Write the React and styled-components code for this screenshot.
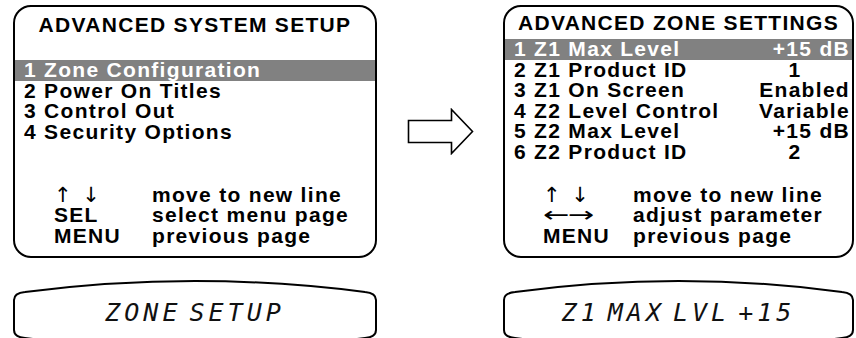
import React from "react";
import styled, { createGlobalStyle } from "styled-components";

const systemItems = [
  { id: 1, label: "1 Zone Configuration", active: true },
  { id: 2, label: "2 Power On Titles" },
  { id: 3, label: "3 Control Out" },
  { id: 4, label: "4 Security Options" },
];

const zoneItems = [
  { id: 1, label: "1 Z1 Max Level", value: "+15 dB", active: true },
  { id: 2, label: "2 Z1 Product ID", value: "1", center: true },
  { id: 3, label: "3 Z1 On Screen", value: "Enabled" },
  { id: 4, label: "4 Z2 Level Control", value: "Variable" },
  { id: 5, label: "5 Z2 Max Level", value: "+15 dB" },
  { id: 6, label: "6 Z2 Product ID", value: "2", center: true },
];

const GlobalStyle = createGlobalStyle`
  html, body {
    margin: 0;
    padding: 0;
    background: #fff;
    overflow: hidden;
  }
  body {
    font-family: "Liberation Sans", Arial, Helvetica, sans-serif;
    color: #000;
  }
`;

// barrel shaped outline of the front panel display
const lcdPath = (w) =>
  `M12 12 Q${w / 2} -10 ${w - 12} 12 Q${w - 1} 13 ${w - 1} 20 L${w - 1} 50 ` +
  `Q${w - 1} 57 ${w - 12} 58 Q${w / 2} 80 12 58 Q1 57 1 50 L1 20 Q1 13 12 12 Z`;

const LcdDisplay = ({ width, text }) => (
  <Lcd>
    <LcdOutline width={width} height="70" viewBox={`0 0 ${width} 70`}>
      <path d={lcdPath(width)} fill="none" stroke="#000" strokeWidth="2" />
    </LcdOutline>
    <LcdText>{text}</LcdText>
  </Lcd>
);

const App = () => {
  return (
    <>
      <GlobalStyle />
      <Page>
        <Panel $top={7}>
          <Title $gap={24}>ADVANCED SYSTEM SETUP</Title>
          {systemItems.map((item) => (
            <Row key={item.id} $active={item.active}>
              <span>{item.label}</span>
            </Row>
          ))}
          <Footer $indent={39} $keyWidth={98}>
            <ArrowKey>↑ ↓</ArrowKey>
            <span>move to new line</span>
            <span>SEL</span>
            <span>select menu page</span>
            <span>MENU</span>
            <span>previous page</span>
          </Footer>
        </Panel>

        <ArrowCell>
          <svg width="67" height="47" viewBox="0 0 67 47">
            <path
              d="M1.5 12.5 H44.5 V1.5 L65.5 23.5 L44.5 45.5 V34.5 H1.5 Z"
              fill="#fff"
              stroke="#000"
              strokeWidth="1.6"
            />
          </svg>
        </ArrowCell>

        <Panel $top={5}>
          <Title $gap={5}>ADVANCED ZONE SETTINGS</Title>
          {zoneItems.map((item) => (
            <Row key={item.id} $active={item.active}>
              <span>{item.label}</span>
              <Value $center={item.center}>{item.value}</Value>
            </Row>
          ))}
          <Footer $indent={38} $keyWidth={90}>
            <ArrowKey>↑ ↓</ArrowKey>
            <span>move to new line</span>
            <ArrowKey>
              <Stretched>←→</Stretched>
            </ArrowKey>
            <span>adjust parameter</span>
            <span>MENU</span>
            <span>previous page</span>
          </Footer>
        </Panel>

        <LcdDisplay width={364} text="ZONE SETUP" />
        <span />
        <LcdDisplay width={351} text="Z1 MAX LVL +15" />
      </Page>
    </>
  );
};

const Page = styled.div`
  display: grid;
  grid-template-columns: 364px 126px 351px;
  grid-template-rows: 253px 70px;
  row-gap: 22px;
  padding: 5px 0 0 13px;
  width: 856px;
  height: 338px;
  box-sizing: border-box;
  overflow: hidden;
`;

const Panel = styled.div`
  box-sizing: border-box;
  height: 100%;
  border: 2px solid #000;
  border-radius: 18px;
  padding-top: ${(p) => p.$top}px;
  display: flex;
  flex-direction: column;
  overflow: hidden;
  font-size: 21px;
  font-weight: bold;
  letter-spacing: 1.3px;
`;

const Title = styled.div`
  text-align: center;
  line-height: 22px;
  margin-bottom: ${(p) => p.$gap}px;
  white-space: nowrap;
`;

const Row = styled.div`
  display: flex;
  justify-content: space-between;
  height: 20.5px;
  line-height: 20.5px;
  padding: 0 2px 0 9px;
  white-space: nowrap;
  background: ${(p) => (p.$active ? "#818181" : "transparent")};
  color: ${(p) => (p.$active ? "#fff" : "#000")};
`;

const Value = styled.span`
  width: 110px;
  text-align: ${(p) => (p.$center ? "center" : "right")};
`;

const Footer = styled.div`
  margin-top: auto;
  padding: 0 0 10px ${(p) => p.$indent}px;
  display: grid;
  grid-template-columns: ${(p) => p.$keyWidth}px 1fr;
  line-height: 20.5px;
  white-space: nowrap;
`;

const ArrowKey = styled.span`
  font-family: "DejaVu Sans", sans-serif;
  font-weight: normal;
  font-size: 21px;
  letter-spacing: 0;
  word-spacing: 4px;
  white-space: pre;
`;

const Stretched = styled.span`
  display: inline-block;
  transform: scaleX(1.5);
  transform-origin: left center;
  letter-spacing: -1px;
`;

const ArrowCell = styled.div`
  display: flex;
  align-items: center;
  justify-content: center;
`;

const Lcd = styled.div`
  position: relative;
  height: 70px;
  display: flex;
  justify-content: center;
  align-items: flex-start;
  padding-top: 20px;
  box-sizing: border-box;
`;

const LcdOutline = styled.svg`
  position: absolute;
  left: 0;
  top: 0;
  overflow: visible;
`;

const LcdText = styled.span`
  position: relative;
  font-family: "DejaVu Sans Mono", "Liberation Mono", monospace;
  font-style: italic;
  font-size: 25px;
  line-height: 25px;
  letter-spacing: 4px;
  word-spacing: -11px;
  color: #111;
  white-space: pre;
`;

export default App;
